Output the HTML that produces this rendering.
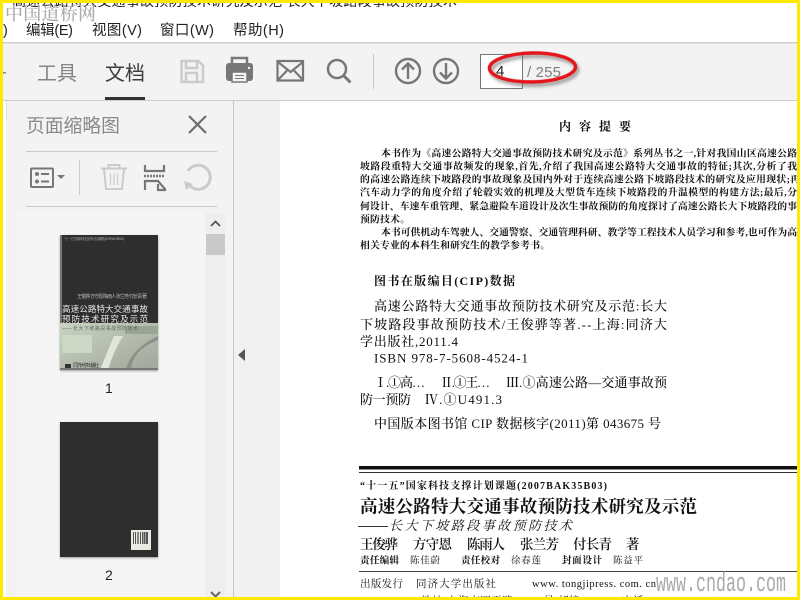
<!DOCTYPE html>
<html lang="zh">
<head>
<meta charset="utf-8">
<title>页面缩略图</title>
<style>
html,body{margin:0;padding:0;width:800px;height:600px;overflow:hidden;background:#fff}
svg{display:block}
.s{font-family:"Liberation Sans","Noto Sans CJK SC",sans-serif}
.p{font-family:"Liberation Serif","Noto Serif CJK SC",serif;fill:#111}
.b{font-weight:700}
</style>
</head>
<body>
<svg xmlns="http://www.w3.org/2000/svg" width="800" height="600" viewBox="0 0 800 600">
<defs>
<clipPath id="pg"><rect x="281" y="101" width="516" height="496"/></clipPath>
<clipPath id="topc"><rect x="0" y="3" width="800" height="4"/></clipPath>
<clipPath id="thumb"><rect x="60" y="235" width="98" height="135"/></clipPath>
<filter id="sh" x="-10%" y="-20%" width="125%" height="150%"><feDropShadow dx="2" dy="3" stdDeviation="1.5" flood-color="#555" flood-opacity=".6"/></filter>
<filter id="sm" x="-5%" y="-5%" width="110%" height="110%"><feDropShadow dx="0" dy="1" stdDeviation="1" flood-color="#000" flood-opacity=".35"/></filter>
<linearGradient id="cov" x1="0" y1="0" x2="1" y2="1"><stop offset="0" stop-color="#c8d3c2"/><stop offset=".5" stop-color="#b4bdae"/><stop offset="1" stop-color="#a2a69c"/></linearGradient>
</defs>

<rect width="800" height="600" fill="#fff"/>

<!-- clipped title line -->
<g clip-path="url(#topc)"><text x="12" y="6" class="s" font-size="14" fill="#222" textLength="445" lengthAdjust="spacing">高速公路特大交通事故预防技术研究及示范 长大下坡路段事故预防技术</text></g>
<!-- watermark -->
<text x="5" y="20" font-family="'Noto Serif CJK SC',serif" font-size="18" fill="#aaa" font-weight="500" textLength="91" lengthAdjust="spacing">中国道桥网</text>
<!-- menu -->
<g class="s" font-size="14.5" fill="#222">
<text x="3" y="35">)</text>
<text x="26" y="35" textLength="47" lengthAdjust="spacing">编辑(E)</text>
<text x="92" y="35" textLength="50" lengthAdjust="spacing">视图(V)</text>
<text x="160" y="35" textLength="54" lengthAdjust="spacing">窗口(W)</text>
<text x="233" y="35" textLength="51" lengthAdjust="spacing">帮助(H)</text>
</g>

<!-- toolbar -->
<rect x="0" y="43" width="800" height="57" fill="#f3f3f3"/>
<rect x="0" y="42" width="800" height="1.5" fill="#cdcdcd"/>
<rect x="0" y="100" width="800" height="1" fill="#cdcdcd"/>
<text x="37" y="80" class="s" font-size="20" fill="#858585">工具</text>
<text x="105" y="80" class="s" font-size="20" fill="#3c3c3c">文档</text>
<rect x="105" y="97" width="40" height="3" fill="#333"/>
<rect x="3" y="72" width="3" height="1.5" fill="#888"/>

<!-- save -->
<g fill="none" stroke="#cbcbcb" stroke-width="2.5">
<path d="M181.500 61h17l4.500 4.500v16.500h-21.500z"/>
<path d="M186 61v7h11v-7M186 82v-9h11v9"/>
</g>
<!-- print -->
<g>
<path d="M232 63v-5h15v5" fill="none" stroke="#777" stroke-width="2.500"/>
<path d="M229 63h21a3 3 0 0 1 3 3v12a3 3 0 0 1-3 3h-21a3 3 0 0 1-3-3v-12a3 3 0 0 1 3-3z" fill="#777"/>
<rect x="232" y="72" width="15" height="10" fill="#f3f3f3" stroke="#777" stroke-width="1.500"/>
<path d="M235 75.500h9M235 78.500h9" stroke="#777"/>
<circle cx="249" cy="68" r="1.200" fill="#f3f3f3"/>
</g>
<!-- mail -->
<g fill="none" stroke="#777" stroke-width="2.200">
<rect x="277.500" y="61" width="25.500" height="19.500"/>
<path d="M278 62l12.500 10 12.500-10M278 80l9.500-10M303 80l-9.500-10"/>
</g>
<!-- search -->
<g fill="none" stroke="#777">
<circle cx="337" cy="69" r="9" stroke-width="2.500"/>
<path d="M343.500 75.500l7 7" stroke-width="3"/>
</g>
<rect x="373" y="54" width="1" height="35" fill="#c8c8c8"/>
<!-- up/down -->
<g fill="none" stroke="#777" stroke-width="2.400">
<circle cx="408" cy="71" r="12"/>
<path d="M408 79v-15M402 69.500l6-6 6 6"/>
<circle cx="446" cy="71" r="12"/>
<path d="M446 63v15M440 72.500l6 6 6-6"/>
</g>
<!-- page number -->
<rect x="480.500" y="54.500" width="42" height="34" fill="#fff" stroke="#777" stroke-width="1"/>
<text x="496" y="76" class="s" font-size="15" fill="#222">4</text>
<text x="527" y="77" class="s" font-size="15" fill="#7f7f7f" textLength="34" lengthAdjust="spacing">/ 255</text>
<ellipse cx="532.500" cy="67.500" rx="43" ry="14.500" fill="none" stroke="#e3141a" stroke-width="3.500" transform="rotate(-1 532 68)" filter="url(#sh)"/>

<!-- side panel -->
<rect x="6" y="101" width="227" height="499" fill="#f3f3f3"/>
<rect x="6" y="101" width="1" height="20" fill="#ddd"/>
<rect x="233" y="101" width="1" height="499" fill="#c8c8c8"/>
<rect x="234" y="101" width="46" height="499" fill="#f1f1f1"/>
<path d="M245 349v12l-7-6z" fill="#555"/>
<text x="26" y="132" class="s" font-size="18.800" fill="#8a8a8a">页面缩略图</text>
<path d="M189 116l17 17M206 116l-17 17" stroke="#6f6f6f" stroke-width="2.200" fill="none"/>
<rect x="26" y="151" width="191" height="1" fill="#c9c9c9"/>
<rect x="26" y="206" width="191" height="1" fill="#c9c9c9"/>
<rect x="79" y="160" width="1" height="35" fill="#cfcfcf"/>
<!-- list icon -->
<g>
<rect x="31" y="168.500" width="22" height="18.500" rx="1" fill="none" stroke="#777" stroke-width="2"/>
<circle cx="37" cy="174" r="2" fill="#777"/>
<circle cx="37" cy="181.500" r="2" fill="#777"/>
<path d="M41 174h8M41 181.500h8" stroke="#777" stroke-width="2"/>
<path d="M57 175h8l-4 4z" fill="#777"/>
</g>
<!-- trash -->
<g fill="none" stroke="#cbcbcb" stroke-width="2">
<path d="M101 168.500h26M108.500 168v-3h11v3"/>
<path d="M104 169l2 20h16l2-20"/>
<path d="M110.500 173.500v11.500M114 173.500v11.500M117.500 173.500v11.500" stroke-width="1.200"/>
</g>
<!-- extract/page break icon -->
<g fill="none" stroke="#777" stroke-width="2.200">
<path d="M145 165v6h19v-6"/>
<path d="M144 176h21" stroke-dasharray="2 1" stroke-width="2.500"/>
<path d="M145 190v-9h13l7 8v1h-7v-6"/>
</g>
<!-- rotate -->
<g fill="none" stroke="#cbcbcb" stroke-width="3">
<path d="M190 186a12 12 0 1 0-2-15"/>
</g>
<path d="M184 181l9 3-7 6z" fill="#cbcbcb"/>

<!-- thumb list -->
<rect x="15" y="213" width="191" height="387" fill="#f5f5f5"/>
<rect x="206" y="213" width="19" height="387" fill="#eee"/>
<rect x="206" y="234" width="19" height="21" fill="#c9c9c9"/>
<path d="M211 226l4.500-4.500 4.500 4.500" fill="none" stroke="#555" stroke-width="1.800"/>
<path d="M211 592l4.500 4.500 4.500-4.500" fill="none" stroke="#666" stroke-width="2"/>

<!-- thumb 1 -->
<rect x="60" y="235" width="98" height="135" fill="#2e2e2e" filter="url(#sm)"/>
<g clip-path="url(#thumb)">
<rect x="60" y="323" width="98" height="47" fill="url(#cov)"/>
<rect x="60" y="235" width="2" height="88" fill="#777"/>
<path d="M100 370q8-20 14-34h9q-10 16-15 34z" fill="#e2e5dc"/>
<path d="M126 370q4-20 32-34v4q-26 10-27 30z" fill="#8c9186"/>
<path d="M62 335h30v18h-30z" fill="#ccd7c5"/>
<path d="M125 326h33v8h-33z" fill="#9aa494"/>
<rect x="60" y="368" width="98" height="2" fill="#777"/>
<g class="s">
<text x="64" y="240" font-size="3.500" fill="#999" textLength="60" lengthAdjust="spacing">"十一五" 国家科技支撑计划课题 (2007BAK35B03)</text>
<text x="77" y="298" font-size="5" fill="#bbb" textLength="70" lengthAdjust="spacing">王俊骅 方守恩 陈雨人 张兰芳 付长青 著</text>
<text x="62" y="312" font-size="8.500" fill="#e8e8e8" textLength="86" lengthAdjust="spacing">高速公路特大交通事故</text>
<text x="62" y="322" font-size="8.500" fill="#e8e8e8" textLength="86" lengthAdjust="spacing">预防技术研究及示范</text>
<text x="62" y="330" font-size="5" fill="#666" textLength="76" lengthAdjust="spacing">——长大下坡路段事故预防技术</text>
<text x="73" y="367" font-size="5" fill="#333" textLength="26" lengthAdjust="spacing">同济大学出版社</text>
</g>
<rect x="65" y="364" width="6" height="4" fill="#333"/>
</g>
<text x="105" y="393" class="s" font-size="14" fill="#222">1</text>

<!-- thumb 2 -->
<rect x="60" y="422" width="98" height="135" fill="#2e2e2e" filter="url(#sm)"/>
<rect x="131" y="530" width="20" height="20" fill="#e9e9e2"/>
<g fill="#555">
<rect x="133" y="532" width="1" height="12"/><rect x="135" y="532" width="1" height="12"/><rect x="137" y="532" width="2" height="12" fill="#888"/><rect x="140" y="532" width="1" height="12"/><rect x="142" y="532" width="1" height="12"/><rect x="143.500" y="532" width="2" height="12"/><rect x="146" y="532" width="2" height="12"/>
</g>
<text x="105" y="580" class="s" font-size="14" fill="#222">2</text>

<!-- document page -->
<rect x="281" y="101" width="516" height="496" fill="#fff"/>
<g clip-path="url(#pg)" class="p">
<g font-size="12" class="b">
<text x="559" y="130.500">内</text><text x="579" y="130.500">容</text><text x="599" y="130.500">提</text><text x="619" y="130.500">要</text>
</g>
<g font-size="9.800" class="b">
<text x="381" y="156.500" textLength="416" lengthAdjust="spacing">本书作为《高速公路特大交通事故预防技术研究及示范》系列丛书之一,针对我国山区高速公路</text>
<text x="360" y="169.500" textLength="437" lengthAdjust="spacing">坡路段重特大交通事故频发的现象,首先,介绍了我国高速公路特大交通事故的特征;其次,分析了我</text>
<text x="360" y="182.500" textLength="440" lengthAdjust="spacing">的高速公路连续下坡路段的事故现象及国内外对于连续高速公路下坡路段技术的研究及应用现状;再</text>
<text x="360" y="195.500" textLength="437" lengthAdjust="spacing">汽车动力学的角度介绍了轮毂实效的机理及大型货车连续下坡路段的升温模型的构建方法;最后,分</text>
<text x="360" y="209.500" textLength="437" lengthAdjust="spacing">何设计、车速车重管理、紧急避险车道设计及次生事故预防的角度探讨了高速公路长大下坡路段的事</text>
<text x="360" y="222.500" textLength="50" lengthAdjust="spacing">预防技术。</text>
<text x="381" y="235.500" textLength="416" lengthAdjust="spacing">本书可供机动车驾驶人、交通警察、交通管理科研、教学等工程技术人员学习和参考,也可作为高</text>
<text x="360" y="248.500" textLength="190" lengthAdjust="spacing">相关专业的本科生和研究生的教学参考书。</text>
</g>
<text x="374" y="285" font-size="12" class="b" textLength="141" lengthAdjust="spacing">图书在版编目(CIP)数据</text>
<g font-size="13" style="font-weight:500">
<text x="374" y="310.500" textLength="293" lengthAdjust="spacing">高速公路特大交通事故预防技术研究及示范:长大</text>
<text x="360" y="329" textLength="307" lengthAdjust="spacing">下坡路段事故预防技术/王俊骅等著.--上海:同济大</text>
<text x="360" y="346" textLength="98" lengthAdjust="spacing">学出版社,2011.4</text>
<text x="374" y="362.500" textLength="154" lengthAdjust="spacing">ISBN 978-7-5608-4524-1</text>
<text x="374" y="387" textLength="51" lengthAdjust="spacing">Ⅰ.①高…</text>
<text x="440" y="387" textLength="50" lengthAdjust="spacing">Ⅱ.①王…</text>
<text x="506" y="387" textLength="161" lengthAdjust="spacing">Ⅲ.①高速公路—交通事故预</text>
<text x="360" y="404" textLength="51" lengthAdjust="spacing">防一预防</text>
<text x="425" y="404" textLength="77" lengthAdjust="spacing">Ⅳ.①U491.3</text>
<text x="374" y="428" textLength="287" lengthAdjust="spacing">中国版本图书馆 CIP 数据核字(2011)第 043675 号</text>
</g>
<rect x="359" y="466" width="438" height="3.500" fill="#111"/>
<rect x="359" y="472" width="438" height="1" fill="#333"/>
<text x="360" y="489" font-size="10" class="b" textLength="247" lengthAdjust="spacing">“十一五”国家科技支撑计划课题(2007BAK35B03)</text>
<text x="360" y="512.500" font-size="17.500" class="b" textLength="337" lengthAdjust="spacing">高速公路特大交通事故预防技术研究及示范</text>
<rect x="358" y="526" width="30" height="1" fill="#333"/>
<text x="389" y="530" font-size="13" font-style="italic" textLength="183" lengthAdjust="spacing">长大下坡路段事故预防技术</text>
<g font-size="13.500" style="font-weight:600">
<text x="360" y="549" textLength="38" lengthAdjust="spacing">王俊骅</text>
<text x="413" y="549" textLength="39" lengthAdjust="spacing">方守恩</text>
<text x="467" y="549" textLength="38" lengthAdjust="spacing">陈雨人</text>
<text x="520" y="549" textLength="39" lengthAdjust="spacing">张兰芳</text>
<text x="573" y="549" textLength="39" lengthAdjust="spacing">付长青</text>
<text x="626" y="549">著</text>
</g>
<g font-size="9.500">
<text x="360" y="563.500" class="b" textLength="39" lengthAdjust="spacing">责任编辑</text>
<text x="410" y="563.500" textLength="30" lengthAdjust="spacing">陈佳蔚</text>
<text x="461" y="563.500" class="b" textLength="39" lengthAdjust="spacing">责任校对</text>
<text x="511" y="563.500" textLength="30" lengthAdjust="spacing">徐春莲</text>
<text x="562" y="563.500" class="b" textLength="40" lengthAdjust="spacing">封面设计</text>
<text x="613" y="563.500" textLength="30" lengthAdjust="spacing">陈益平</text>
</g>
<rect x="359" y="571" width="438" height="1" fill="#444"/>
<g font-size="10.500">
<text x="360" y="587" textLength="43" lengthAdjust="spacing">出版发行</text>
<text x="416" y="587" textLength="80" lengthAdjust="spacing">同济大学出版社</text>
<text x="532" y="587" textLength="124" lengthAdjust="spacing">www. tongjipress. com. cn</text>
<text x="417" y="604" textLength="303" lengthAdjust="spacing">(地址:上海市四平路 1239 号 邮编:200092 电话:021-65985622)</text>
</g>
</g>
<text x="656" y="591" font-family="'Liberation Mono',monospace" font-size="27" fill="#aaa" textLength="130" lengthAdjust="spacingAndGlyphs">www.cndao.com</text>

<!-- yellow frame -->
<rect x="0" y="0" width="800" height="3" fill="#ffe900"/>
<rect x="0" y="597" width="800" height="3" fill="#ffe900"/>
<rect x="0" y="0" width="3" height="600" fill="#ffe900"/>
<rect x="797" y="0" width="3" height="600" fill="#ffe900"/>
</svg>
</body>
</html>
